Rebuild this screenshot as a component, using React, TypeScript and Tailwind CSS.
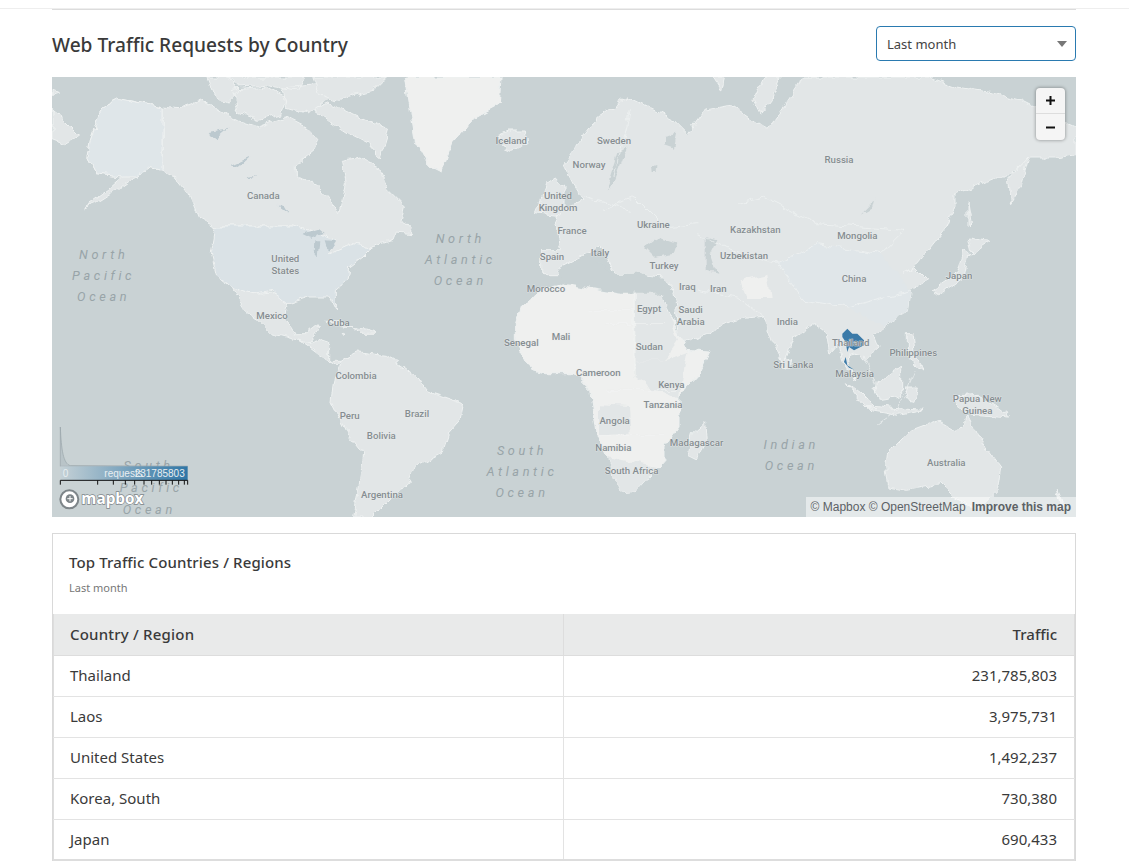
const LAND = "#e2e6e7";
const COAST = "#eef1f1";
const OCEAN = "#c9d2d4";
const SAND = "#eff0ef";

const rows = [
  ["Thailand", "231,785,803"],
  ["Laos", "3,975,731"],
  ["United States", "1,492,237"],
  ["Korea, South", "730,380"],
  ["Japan", "690,433"],
];

// map geometry, coordinates are 3x page px relative to the map corner
const westLand = [
  "M115 190L150 90 200 65 330 90 330 280 290 270 250 300 200 335 130 380 95 392 170 340 215 300 130 290 105 245Z",
  "M330 90L380 95 450 70 510 105 560 130 620 150 700 120 760 150 800 190 790 215 730 265 730 300 790 320 835 370 860 410 880 320 865 250 930 240 985 280 1010 340 1060 390 1050 430 1085 470 1030 465 1020 490 960 510 900 500 855 520 830 530 850 490 790 465 725 447 490 447 440 420 410 350 370 300 330 280Z",
  "M465 0L530 0 560 45 530 75 490 60ZM540 40L640 30 700 60 690 110 620 130 560 105ZM530 0L760 0 740 40 640 25 560 30ZM690 30L790 20 830 60 770 110 700 90Z",
  "M780 95L830 75 900 110 1010 160 985 240 950 200 900 175 830 130ZM780 0L1000 0 960 40 860 70 800 50Z",
  "M0 100L40 130 85 175 40 200 0 185ZM0 40L20 48 0 55Z",
  "M540 630L600 650 660 645 710 680 700 720 730 770 760 770 790 745 810 750 770 800 740 790 660 770 620 730 580 700 550 650Z",
  "M740 790L770 800 800 790 830 800 830 850 870 850 850 865 810 840 770 810Z",
  "M870 850L920 825 1000 835 1060 875 1110 920 1130 945 1235 980 1225 1030 1190 1070 1170 1130 1090 1170 1070 1220 1010 1270 960 1320 905 1320 925 1200 935 1130 880 1060 840 980 850 900Z",
  "M820 730L860 728 900 750 860 745ZM900 755L950 760 975 772 920 772ZM870 768L885 772 875 775Z",
  "M1335 180L1370 165 1420 165 1425 200 1380 220 1345 205Z",
  "M1480 320L1510 300 1536 330 1536 420 1450 410 1470 360Z",
];

const eurasia =
  "M-70 515L-10 515 -30 440 -10 400 60 370 30 320 0 260 40 200 100 120 190 60 250 90 330 130 370 170 420 100 500 85 610 160 660 90 720 0 1098 0 1180 30 1300 50 1368 69 1450 110 1536 150 1536 230 1470 240 1400 240 1330 300 1290 300 1170 350 1170 385 1140 460 1060 560 1015 590 1050 570 1090 610 1040 640 1030 700 960 750 930 770 945 810 900 850 885 830 870 825 850 830 852 860 875 915 835 850 825 800 800 830 790 770 750 740 690 780 660 860 625 790 600 720 510 730 430 770 350 800 330 650 300 600 190 590 150 590 110 510 60 530 0 560 -20 590 -70 590Z";

const eastLand = [
  eurasia,
  "M425 1035L430 1090 395 1155 370 1130 385 1070Z",
  "M850 920L890 950 940 1000 900 985ZM900 985L1000 995 1080 1000 1000 1015 920 1000ZM930 930L1010 870 1010 960 950 970ZM1020 930L1060 930 1050 970 1030 965Z",
  "M1030 770L1045 770 1050 830 1080 880 1050 870 1030 810Z",
  "M1170 960L1240 955 1300 990 1340 1020 1200 1010Z",
  "M970 1130L1040 1060 1120 1030 1170 1060 1215 1020 1250 1090 1310 1170 1300 1240 1240 1300 1170 1260 1130 1220 1030 1240 975 1230 965 1170Z",
  "M1105 640L1180 590 1200 520 1215 530 1200 600 1130 650ZM1210 480L1280 490 1220 530ZM1215 380L1225 440 1215 450Z",
  "M665 840L680 850 675 875 660 870ZM1480 1240L1510 1310 1495 1300ZM1330 310L1395 240 1370 330 1340 380Z",
  "M570 70L600 0 650 0 620 70 590 110ZM445 0L480 0 470 40Z",
];

const africa =
  "M-146 745L-130 690 -70 640 0 620 80 635 170 650 215 640 300 650 310 690 370 820 435 825 400 900 345 960 345 1050 300 1110 300 1150 220 1240 165 1245 130 1140 100 1080 80 940 30 890 -60 890 -100 880 -146 790Z";

const africaGrey = [
  "M212 640L300 650 310 690 345 790 300 850 215 850Z",
  "M105 985L195 990 200 1070 105 1075Z",
  "M130 1140L280 1170 220 1240 165 1245Z",
  "M215 850L300 850 370 825 345 960 270 940 215 900Z",
];

const inlandSea = [
  "M240 510L280 480 340 500 330 530 270 540Z",
  "M425 480L460 490 440 530 460 590 425 580Z",
  "M160 230L190 210 150 320 125 340Z",
  "M-20 590L60 530 110 560 150 590 230 590 300 610 290 650 170 650 80 635 0 620Z",
  "M258 265L280 258 278 285 260 285Z",
  "M890 410L930 370 935 350 925 390Z",
  "M300 180L340 170 330 215 300 205Z",
];

const borders = [
  "M210 640L210 880M120 740L300 740M80 700L210 700M130 940L340 940M105 1075L300 1075",
  "M120 400L210 360 300 450 400 440M520 380L600 360 680 400 760 440M760 440L1020 460 950 530 760 500 640 560 500 520 400 470",
  "M640 560L720 670 850 690 1040 640M400 640L520 660 600 720M200 100L150 300M60 360L200 400",
  "M1050 880L1000 1000 940 1040M900 830L940 950",
];

const labels: [string, number, number][] = [
  ["Canada", 634, 365], ["United", 700, 555], ["States", 700, 591], ["Mexico", 660, 727],
  ["Cuba", 860, 746], ["Colombia", 912, 905], ["Peru", 893, 1025], ["Brazil", 1095, 1020],
  ["Bolivia", 988, 1086], ["Argentina", 990, 1262], ["Iceland", 1378, 201], ["United", 1518, 366],
  ["Kingdom", 1518, 403], ["Spain", 1500, 550], ["Morocco", 1482, 646], ["Senegal", 1408, 806],
  ["Mali", 1527, 788], ["France", 1560, 472], ["Sweden", 1686, 202], ["Norway", 1611, 272],
  ["Ukraine", 1804, 453], ["Kazakhstan", 2110, 468], ["Mongolia", 2416, 485], ["Russia", 2361, 259],
  ["Uzbekistan", 2076, 546], ["Italy", 1644, 537], ["Turkey", 1836, 576], ["Iraq", 1906, 640],
  ["Iran", 1999, 644], ["China", 2406, 614], ["Japan", 2721, 606], ["Egypt", 1791, 704],
  ["Saudi", 1916, 708], ["Arabia", 1916, 744], ["India", 2206, 744], ["Sudan", 1792, 819],
  ["Thailand", 2396, 807], ["Philippines", 2584, 838], ["Sri Lanka", 2224, 873], ["Malaysia", 2408, 900],
  ["Cameroon", 1639, 897], ["Kenya", 1858, 934], ["Tanzania", 1833, 992], ["Papua New", 2776, 975],
  ["Guinea", 2776, 1011], ["Angola", 1688, 1042], ["Madagascar", 1934, 1107], ["Namibia", 1684, 1123],
  ["South Africa", 1739, 1191], ["Australia", 2683, 1166],
];

const oceans: [string, number, number][] = [
  ["North", 155, 547], ["Pacific", 155, 610], ["Ocean", 155, 673],
  ["North", 1225, 498], ["Atlantic", 1225, 561], ["Ocean", 1225, 625],
  ["South", 1410, 1133], ["Atlantic", 1410, 1197], ["Ocean", 1410, 1260],
  ["South", 290, 1178], ["Pacific", 298, 1245], ["Ocean", 292, 1310],
  ["Indian", 2218, 1115], ["Ocean", 2218, 1178],
];

const ticks = [25, 137, 184, 220, 248, 276, 299, 322, 342, 361, 380, 397, 407];

function WorldMap() {
  return (
    <svg viewBox="0 0 3072 1320" className="block h-[440px] w-[1024px]">
      <defs>
        <linearGradient id="legend-ramp" x1="0" x2="1" y1="0" y2="0">
          <stop offset="0" stopColor="#c5d1d6" />
          <stop offset="1" stopColor="#2f76a6" />
        </linearGradient>
        <filter id="rough-coast" filterUnits="userSpaceOnUse" x="-100" y="-100" width="3300" height="1520">
          <feTurbulence type="fractalNoise" baseFrequency="0.028" numOctaves="3" seed="4" />
          <feDisplacementMap in="SourceGraphic" scale="26" xChannelSelector="R" yChannelSelector="G" />
        </filter>
      </defs>
      <rect width="3072" height="1320" fill={OCEAN} />
      <g filter="url(#rough-coast)">
        <g fill={LAND} stroke={COAST} strokeWidth="3" strokeLinejoin="round">
          {westLand.map((d) => (
            <path key={d} d={d} />
          ))}
          <path fill={SAND} d="M1060 0L1350 0 1345 80 1270 120 1200 200 1170 285 1130 265 1090 190 1075 100Z" />
          <path
            fill="#dae2e6"
            d="M490 447L725 447 790 465 850 490 830 530 900 500 960 510 930 540 890 570 885 610 850 640 850 700 830 660 770 660 710 680 660 640 600 650 540 630 490 590 475 530Z"
          />
          <path fill="#dfe6e9" d="M115 190L150 90 200 65 330 90 330 280 290 270 250 300 215 300 130 290 105 245Z" />
        </g>
        <g fill="#bcc9cf">
          <path d="M470 165L530 155 490 190ZM540 265L595 240 560 270ZM590 300L615 295 595 305ZM680 390L710 410 695 385Z" />
          <path d="M750 470L800 455 815 468 775 482ZM790 490L805 490 800 535 788 530ZM818 490L852 492 835 518 825 512Z" />
        </g>
        <g transform="translate(1536 0)">
          <g fill={LAND} stroke={COAST} strokeWidth="3" strokeLinejoin="round">
            {eastLand.map((d) => (
              <path key={d} d={d} />
            ))}
            <path fill={SAND} d={africa} />
          </g>
          <g fill={LAND}>
            {africaGrey.map((d) => (
              <path key={d} d={d} />
            ))}
          </g>
          <path fill={SAND} d="M530 610L610 590 620 660 545 660Z" />
          <path fill="#e0e6e9" d="M640 560L760 500 950 530 1040 640 1030 700 960 750 850 690 720 670Z" />
          <g fill={OCEAN}>
            {inlandSea.map((d) => (
              <path key={d} d={d} />
            ))}
          </g>
          <g fill="none" stroke="#f2f4f4" strokeWidth="2">
            {borders.map((d) => (
              <path key={d} d={d} />
            ))}
          </g>
        </g>
      </g>
      <path
        transform="translate(1536 0)"
        fill="#3b7aa8"
        d="M835 770L850 755 865 770 880 770 900 790 900 805 870 820 855 810 850 825 845 795 835 780ZM845 840L850 865 870 878 855 872 840 855Z"
      />
      <g
        fontFamily="Roboto, sans-serif"
        fontWeight="500"
        fontSize="29"
        textAnchor="middle"
        fill="#858d91"
        stroke="#eceeee"
        strokeWidth="2"
        paintOrder="stroke"
      >
        {labels.map(([name, x, y]) => (
          <text key={name + x} x={x} y={y}>
            {name}
          </text>
        ))}
      </g>
      <g
        fontFamily="Roboto, sans-serif"
        fontStyle="italic"
        fontSize="38"
        letterSpacing="11"
        textAnchor="middle"
        fill="#98a4a8"
      >
        {oceans.map(([name, x, y]) => (
          <text key={name + x + y} x={x} y={y}>
            {name}
          </text>
        ))}
      </g>
      <g>
        <path d="M25 1050C28 1120 34 1160 55 1166L407 1168 25 1168Z" fill="#b9c4c8" stroke="#98a4a9" strokeWidth="2" />
        <rect x="25" y="1168" width="382" height="42" fill="url(#legend-ramp)" />
        <g fontFamily="'Liberation Sans', sans-serif" fontSize="30" fill="#e8eef1">
          <text x="32" y="1200">0</text>
          <text x="157" y="1200">requests</text>
          <text x="248" y="1200">231785803</text>
        </g>
        <path d="M25 1210H407" stroke="#111" strokeWidth="3" />
        {ticks.map((x) => (
          <path key={x} d={`M${x} 1210V1223`} stroke="#111" strokeWidth="3" />
        ))}
        <circle cx="52" cy="1267" r="27" fill="#fff" stroke="#7d8589" strokeWidth="6" />
        <circle cx="54" cy="1265" r="13" fill="#7d8589" />
        <path d="M54 1257v16M46 1265h16" stroke="#fff" strokeWidth="3" />
        <text
          x="88"
          y="1280"
          fontFamily="'Open Sans', sans-serif"
          fontWeight="700"
          fontSize="46"
          fill="#fff"
          stroke="#7d8589"
          strokeWidth="4"
          paintOrder="stroke"
        >
          mapbox
        </text>
      </g>
    </svg>
  );
}

export default function App() {
  return (
    <div className="h-[861px] overflow-hidden bg-white pt-2 font-['Noto_Sans',sans-serif] text-[#3a3a3a]">
      <div className="border-t border-[#eeeeee]">
        <div className="ml-[52px] w-[1024px] border-t border-[#dcdcdc]" />
      </div>
      <div className="ml-[52px] w-[1024px]">
        <div className="flex h-[67px] items-center justify-between">
          <h2 className="mt-[3px] text-[19.15px] font-medium">Web Traffic Requests by Country</h2>
          <div className="relative flex h-[35px] w-[200px] items-center rounded border border-[#2a7ab0] pt-[2px] pl-2.5 text-[13px] text-[#444]">
            Last month
            <span className="absolute top-[14px] right-[8px] h-0 w-0 border-x-[5px] border-t-[6px] border-x-transparent border-t-[#777]" />
          </div>
        </div>

        <div className="relative h-[440px] overflow-hidden">
          <WorldMap />
          <div className="absolute top-[11px] right-[11px] w-[29px] rounded bg-[#f5f5f5] shadow-[0_0_3px_1px_rgba(0,0,0,0.25)]">
            <div className="flex h-[26px] items-center justify-center border-b border-[#dddddd]">
              <svg width="11" height="11" viewBox="0 0 11 11">
                <path d="M5.5 1v9M1 5.5h9" stroke="#111" strokeWidth="2" />
              </svg>
            </div>
            <div className="flex h-[26px] items-center justify-center">
              <svg width="11" height="11" viewBox="0 0 11 11">
                <path d="M1 5.5h9" stroke="#111" strokeWidth="2" />
              </svg>
            </div>
          </div>
          <div className="absolute right-0 bottom-0 flex h-5 items-center gap-1.5 bg-white/50 px-[5px] font-['Liberation_Sans',sans-serif] text-xs text-[#5c6266]">
            <span>© Mapbox © OpenStreetMap</span>
            <span className="font-bold">Improve this map</span>
          </div>
        </div>

        <div className="mt-4 border border-[#d9d9d9]">
          <div className="h-20 px-4 pt-4">
            <p className="text-[15px] leading-6 font-medium tracking-[0.12px]">Top Traffic Countries / Regions</p>
            <p className="mt-[6px] text-[11px] leading-4 text-[#777]">Last month</p>
          </div>
          <table className="w-full table-fixed border-collapse border-x border-b-[2px] border-[#dddddd] text-[15px]">
            <thead>
              <tr className="h-[41px] bg-[#e9eaea]">
                <th className="w-[510px] border-r border-b border-[#dddddd] px-4 text-left font-medium tracking-[0.2px]">
                  Country / Region
                </th>
                <th className="border-b border-[#dddddd] px-[17px] text-right font-medium">Traffic</th>
              </tr>
            </thead>
            <tbody>
              {rows.map(([country, traffic]) => (
                <tr key={country} className="h-[41px] border-b border-[#e3e3e3] last:border-b-0">
                  <td className="border-r border-[#e3e3e3] px-4">{country}</td>
                  <td className="px-[17px] text-right">{traffic}</td>
                </tr>
              ))}
            </tbody>
          </table>
        </div>
      </div>
    </div>
  );
}
